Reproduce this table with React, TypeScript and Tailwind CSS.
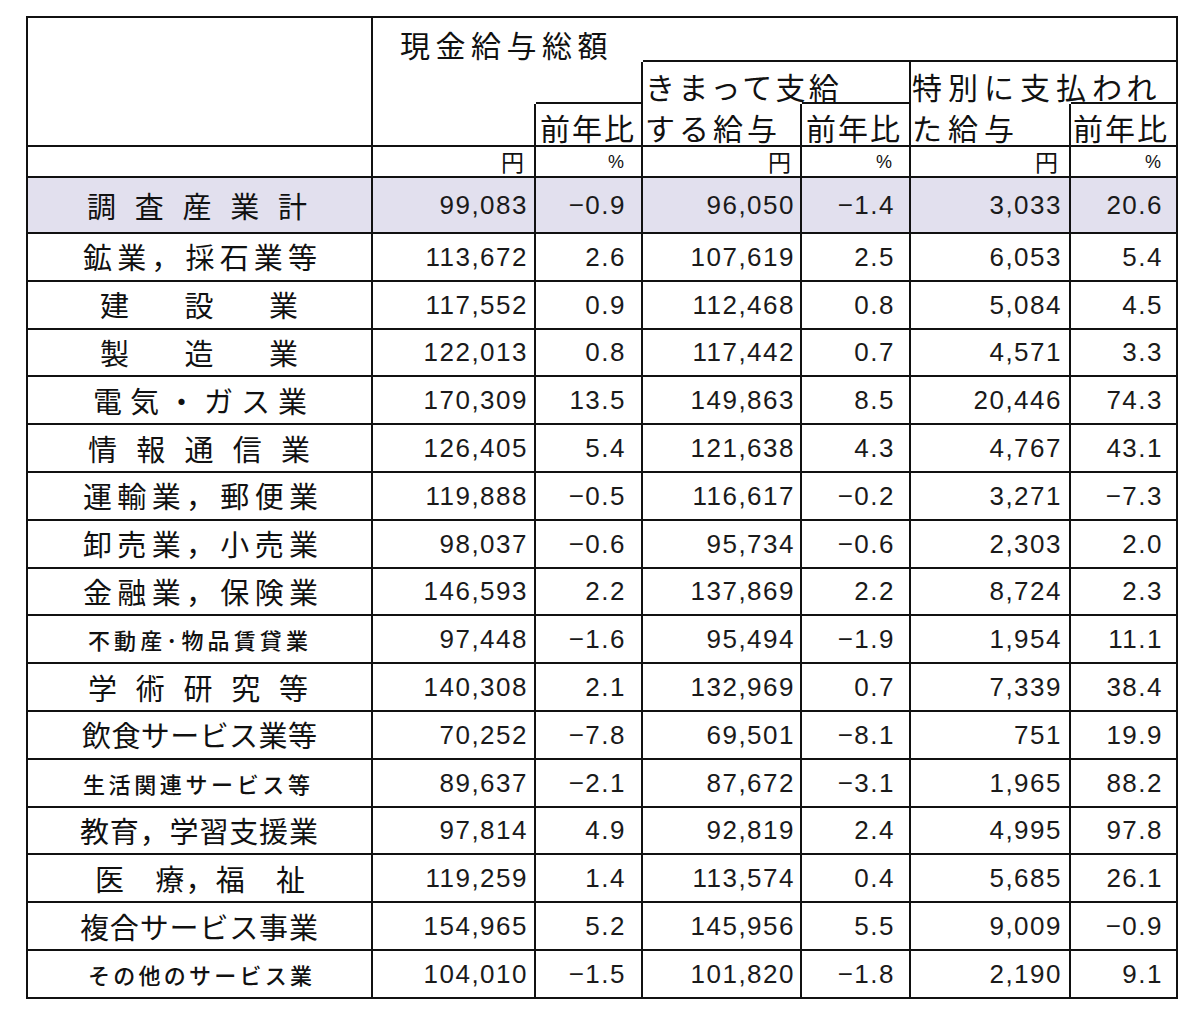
const COLS = "grid grid-cols-[345px_163px_107px_159px_109px_160px_107px]";
const B = "border-[#111]";
const JP = "font-['Noto_Sans_CJK_JP',sans-serif]";
const NUM = "font-['Liberation_Sans',Arial,sans-serif]";

type Row = {
  label: string;
  pos: string;
  small?: boolean;
  vals: string[];
  hl?: boolean;
};

const rows: Row[] = [
  { label: "調査産業計", pos: "ml-[59px] w-[220px]", vals: ["99,083", "−0.9", "96,050", "−1.4", "3,033", "20.6"], hl: true },
  { label: "鉱業，採石業等", pos: "ml-[55px] w-[234px]", vals: ["113,672", "2.6", "107,619", "2.5", "6,053", "5.4"] },
  { label: "建設業", pos: "ml-[72px] w-[198px]", vals: ["117,552", "0.9", "112,468", "0.8", "5,084", "4.5"] },
  { label: "製造業", pos: "ml-[72px] w-[198px]", vals: ["122,013", "0.8", "117,442", "0.7", "4,571", "3.3"] },
  { label: "電気・ガス業", pos: "ml-[65px] w-[214px]", vals: ["170,309", "13.5", "149,863", "8.5", "20,446", "74.3"] },
  { label: "情報通信業", pos: "ml-[60px] w-[222px]", vals: ["126,405", "5.4", "121,638", "4.3", "4,767", "43.1"] },
  { label: "運輸業，郵便業", pos: "ml-[55px] w-[235px]", vals: ["119,888", "−0.5", "116,617", "−0.2", "3,271", "−7.3"] },
  { label: "卸売業，小売業", pos: "ml-[55px] w-[235px]", vals: ["98,037", "−0.6", "95,734", "−0.6", "2,303", "2.0"] },
  { label: "金融業，保険業", pos: "ml-[55px] w-[235px]", vals: ["146,593", "2.2", "137,869", "2.2", "8,724", "2.3"] },
  { label: "不動産･物品賃貸業", pos: "ml-[60px] w-[220px]", small: true, vals: ["97,448", "−1.6", "95,494", "−1.9", "1,954", "11.1"] },
  { label: "学術研究等", pos: "ml-[60px] w-[220px]", vals: ["140,308", "2.1", "132,969", "0.7", "7,339", "38.4"] },
  { label: "飲食サービス業等", pos: "ml-[54px] w-[235px]", vals: ["70,252", "−7.8", "69,501", "−8.1", "751", "19.9"] },
  { label: "生活関連サービス等", pos: "ml-[55px] w-[227px]", small: true, vals: ["89,637", "−2.1", "87,672", "−3.1", "1,965", "88.2"] },
  { label: "教育，学習支援業", pos: "ml-[52px] w-[238px]", vals: ["97,814", "4.9", "92,819", "2.4", "4,995", "97.8"] },
  { label: "医　療，福　祉", pos: "ml-[67px] w-[210px]", vals: ["119,259", "1.4", "113,574", "0.4", "5,685", "26.1"] },
  { label: "複合サービス事業", pos: "ml-[52px] w-[238px]", vals: ["154,965", "5.2", "145,956", "5.5", "9,009", "−0.9"] },
  { label: "その他のサービス業", pos: "ml-[60px] w-[224px]", small: true, vals: ["104,010", "−1.5", "101,820", "−1.8", "2,190", "9.1"] },
];

// right padding per value column
const PR = ["pr-[6px]", "pr-[15px]", "pr-[5px]", "pr-[14px]", "pr-[7px]", "pr-[13px]"];
const UNIT_PR = ["pr-[10px]", "pr-[17px]", "pr-[9px]", "pr-[17px]", "pr-[11px]", "pr-[15px]"];

function Label({ row }: { row: Row }) {
  return (
    <div
      className={`flex justify-between leading-none ${JP} ${row.pos} ${
        row.small ? "text-[22px] font-medium" : "text-[29px]"
      }`}
    >
      {Array.from(row.label).map((ch, i) => (
        <span key={i}>{ch}</span>
      ))}
    </div>
  );
}

function DataRow({ row }: { row: Row }) {
  return (
    <div className={`${COLS} ${row.hl ? "h-[56px] bg-[#e2e0ee]" : "h-[47.8px]"}`}>
      <div className={`flex items-center border-r-2 border-b-2 ${B}`}>
        <Label row={row} />
      </div>
      {row.vals.map((v, i) => (
        <div
          key={i}
          className={`flex items-center justify-end border-r-2 border-b-2 ${B} ${PR[i]} ${NUM} text-[26px] tracking-[1.5px] leading-none text-[#1a1a1a]`}
        >
          {v}
        </div>
      ))}
    </div>
  );
}

function Header() {
  const head = `flex items-end whitespace-nowrap ${JP} text-[30px] leading-none pb-[3px]`;
  return (
    <div className={`${COLS} grid-rows-[44px_42px_43px_31px]`}>
      <div className={`col-start-1 row-start-1 row-span-3 border-r-2 border-b-2 ${B}`} />
      <div className={`col-start-2 col-span-2 row-start-1 ${head} pl-[27px] tracking-[5.5px]`}>現金給与総額</div>
      <div className={`col-start-4 col-span-4 row-start-1 border-r-2 border-b-2 ${B}`} />

      <div className={`col-start-3 row-start-2 border-r-2 border-b-2 ${B}`} />
      <div className={`col-start-4 row-start-2 ${head} pl-[2px] tracking-[3.3px]`}>きまって支給</div>
      <div className={`col-start-5 row-start-2 border-r-2 border-b-2 ${B}`} />
      <div className={`col-start-6 row-start-2 ${head} pl-[1px] tracking-[6px]`}>特別に支払われ</div>
      <div className={`col-start-7 row-start-2 border-r-2 border-b-2 ${B}`} />

      <div className={`col-start-2 row-start-3 border-r-2 border-b-2 ${B}`} />
      <div className={`col-start-3 row-start-3 border-r-2 border-b-2 ${B} ${head} pl-[4px] tracking-[2px]`}>前年比</div>
      <div className={`col-start-4 row-start-3 border-r-2 border-b-2 ${B} ${head} pl-[2px] tracking-[4px]`}>する給与</div>
      <div className={`col-start-5 row-start-3 border-r-2 border-b-2 ${B} ${head} pl-[4px] tracking-[2px]`}>前年比</div>
      <div className={`col-start-6 row-start-3 border-r-2 border-b-2 ${B} ${head} pl-[1px] tracking-[6px]`}>た給与</div>
      <div className={`col-start-7 row-start-3 border-r-2 border-b-2 ${B} ${head} pl-[2px] tracking-[2px]`}>前年比</div>

      <div className={`col-start-1 row-start-4 border-r-2 border-b-2 ${B}`} />
      {["円", "%", "円", "%", "円", "%"].map((u, i) => (
        <div
          key={i}
          className={`row-start-4 flex items-center justify-end border-r-2 border-b-2 ${B} ${UNIT_PR[i]} leading-none ${
            u === "円" ? `${JP} text-[23px]` : `${NUM} text-[18px]`
          }`}
        >
          {u}
        </div>
      ))}
    </div>
  );
}

export default function App() {
  return (
    <div className="min-h-[1018px] w-[1200px] bg-white pt-[16px] text-[#111]">
      <div className={`ml-[26px] w-[1152px] border-l-2 border-t-2 ${B}`}>
        <Header />
        {rows.map((r, i) => (
          <DataRow key={i} row={r} />
        ))}
      </div>
    </div>
  );
}
